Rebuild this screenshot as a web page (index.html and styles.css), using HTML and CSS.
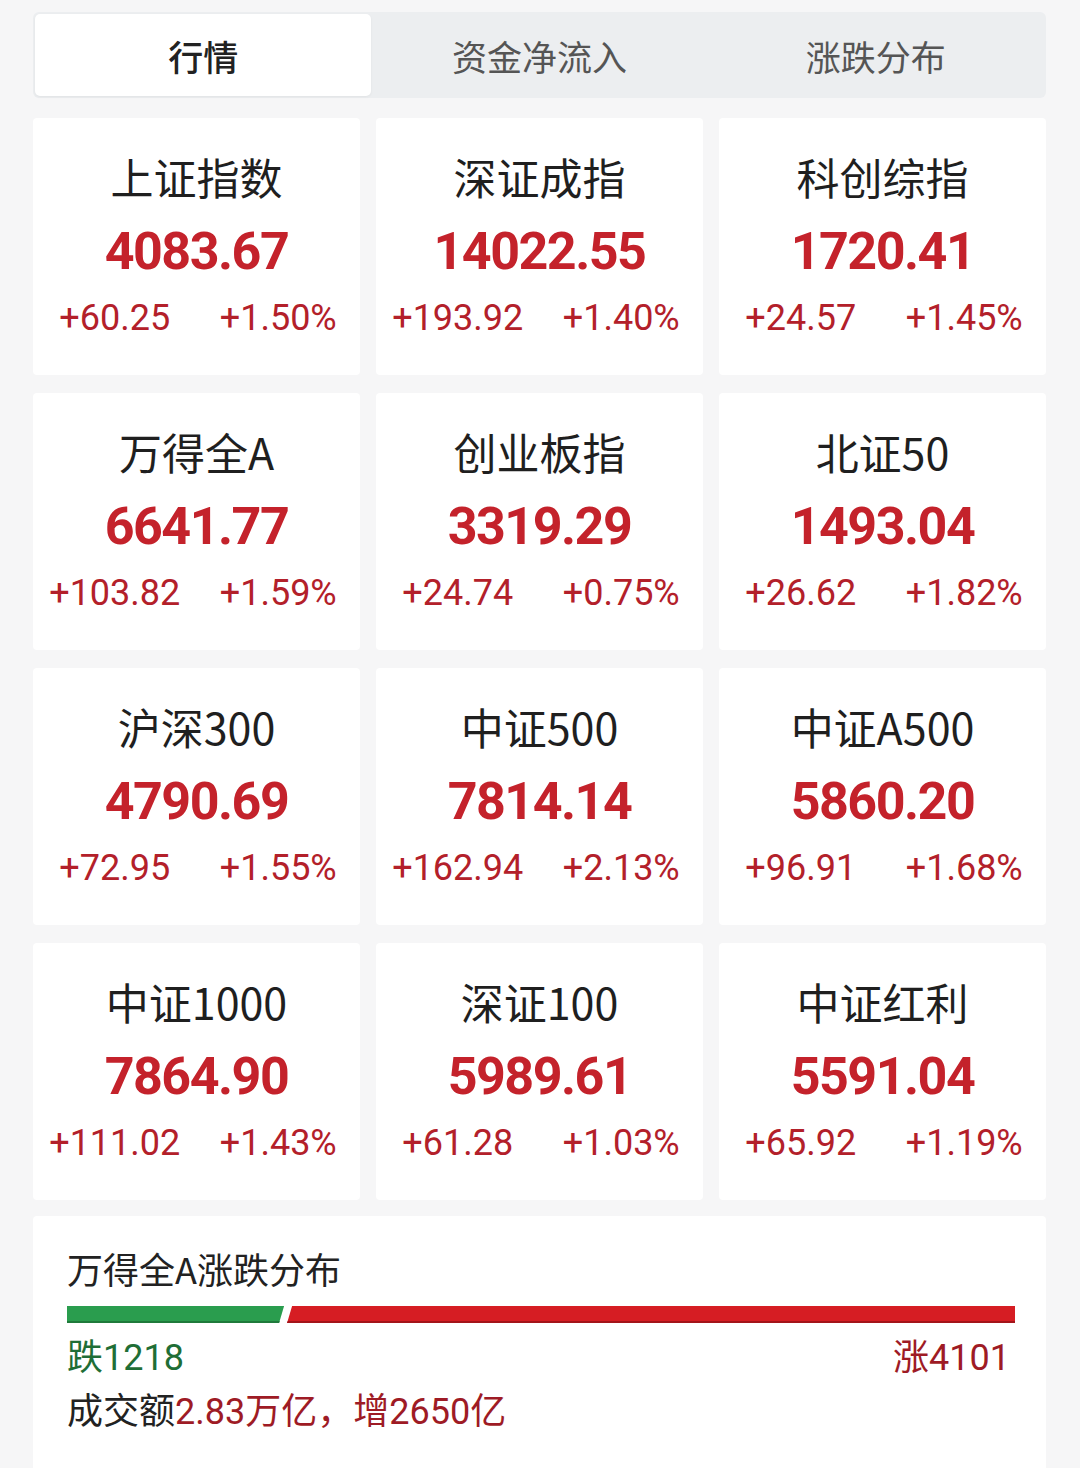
FILE: index.html
```html
<!DOCTYPE html>
<html lang="zh-CN">
<head>
  <meta charset="UTF-8" />
  <meta name="viewport" content="width=device-width,initial-scale=1.0" />
  <title>行情</title>
  <link rel="stylesheet" href="styles.css">
</head>
<body>
  <div class="page">
    <nav class="tabs">
      <a class="tab active">行情</a>
      <a class="tab">资金净流入</a>
      <a class="tab">涨跌分布</a>
    </nav>

    <div class="grid">
      <div class="card">
        <div class="name">上证指数</div>
        <div class="value">4083.67</div>
        <div class="change"><span>+60.25</span><span>+1.50%</span></div>
      </div>
      <div class="card">
        <div class="name">深证成指</div>
        <div class="value">14022.55</div>
        <div class="change"><span>+193.92</span><span>+1.40%</span></div>
      </div>
      <div class="card">
        <div class="name">科创综指</div>
        <div class="value">1720.41</div>
        <div class="change"><span>+24.57</span><span>+1.45%</span></div>
      </div>

      <div class="card">
        <div class="name">万得全A</div>
        <div class="value">6641.77</div>
        <div class="change"><span>+103.82</span><span>+1.59%</span></div>
      </div>
      <div class="card">
        <div class="name">创业板指</div>
        <div class="value">3319.29</div>
        <div class="change"><span>+24.74</span><span>+0.75%</span></div>
      </div>
      <div class="card">
        <div class="name">北证50</div>
        <div class="value">1493.04</div>
        <div class="change"><span>+26.62</span><span>+1.82%</span></div>
      </div>

      <div class="card">
        <div class="name">沪深300</div>
        <div class="value">4790.69</div>
        <div class="change"><span>+72.95</span><span>+1.55%</span></div>
      </div>
      <div class="card">
        <div class="name">中证500</div>
        <div class="value">7814.14</div>
        <div class="change"><span>+162.94</span><span>+2.13%</span></div>
      </div>
      <div class="card">
        <div class="name">中证A500</div>
        <div class="value">5860.20</div>
        <div class="change"><span>+96.91</span><span>+1.68%</span></div>
      </div>

      <div class="card">
        <div class="name">中证1000</div>
        <div class="value">7864.90</div>
        <div class="change"><span>+111.02</span><span>+1.43%</span></div>
      </div>
      <div class="card">
        <div class="name">深证100</div>
        <div class="value">5989.61</div>
        <div class="change"><span>+61.28</span><span>+1.03%</span></div>
      </div>
      <div class="card">
        <div class="name">中证红利</div>
        <div class="value">5591.04</div>
        <div class="change"><span>+65.92</span><span>+1.19%</span></div>
      </div>
    </div>

    <div class="breadth">
      <div class="breadth-title">万得全A涨跌分布</div>
      <div class="bar">
        <div class="bar-down" style="width:22.9%"></div>
        <div class="bar-up"></div>
      </div>
      <div class="counts">
        <span class="down">跌1218</span>
        <span class="up">涨4101</span>
      </div>
      <div class="turnover">成交额<span class="hl">2.83万亿，增2650亿</span></div>
    </div>
  </div>
</body>
</html>
```

FILE: styles.css
```css
body {
  margin: 0;
  background: #f6f6f7;
  font-family: Roboto, "Noto Sans CJK SC", sans-serif;
  color: #222;
}

.page {
  width: 1013px;
  margin-left: 33px;
  padding-top: 12px;
}

.tabs {
  display: flex;
  background: #eceef0;
  border-radius: 6px;
  padding: 2px;
  height: 82px;
}

.tab {
  flex: 1;
  display: flex;
  align-items: center;
  justify-content: center;
  font-family: "Noto Sans CJK SC", sans-serif;
  font-size: 35px;
  color: #555;
  border-radius: 5px;
}

.tab.active {
  background: #fff;
  color: #222;
  font-weight: 500;
  box-shadow: 0 1px 3px #0000000d;
}

.grid {
  display: grid;
  grid-template-columns: repeat(3, 1fr);
  grid-auto-rows: 257px;
  gap: 18px 16px;
  margin-top: 20px;
}

.card {
  background: #fff;
  border-radius: 4px;
  padding-top: 28px;
  text-align: center;
}

.name {
  font-family: "Noto Sans CJK SC", sans-serif;
  font-size: 43px;
  line-height: 60px;
  color: #1f1f1f;
}

.value {
  margin-top: 10px;
  font-size: 52px;
  line-height: 72px;
  font-weight: 700;
  letter-spacing: -1.5px;
  color: #c4222b;
}

.change {
  display: grid;
  grid-template-columns: 1fr 1fr;
  font-size: 36px;
  line-height: 60px;
  color: #b3202a;
}

.breadth {
  background: #fff;
  margin-top: 16px;
  padding: 28px 31px 40px 34px;
  border-radius: 4px 4px 0 0;
}

.breadth-title {
  font-family: "Noto Sans CJK SC", sans-serif;
  font-size: 36px;
  line-height: 48px;
}

.bar {
  display: flex;
  gap: 3px;
  height: 17px;
  margin-top: 14px;
}

.bar-down {
  background: #2a9d4e;
  box-shadow: inset 0 -2px #1f7a3b;
  clip-path: polygon(0 0, 100% 0, calc(100% - 5px) 100%, 0 100%);
}

.bar-up {
  flex: 1;
  background: #d61d23;
  box-shadow: inset 0 -2px #a3141a;
  clip-path: polygon(5px 0, 100% 0, 100% 100%, 0 100%);
}

.counts {
  display: flex;
  justify-content: space-between;
  margin-top: 11px;
  padding-right: 5px;
  font-size: 36px;
  line-height: 48px;
}

.down {
  color: #1f6e36;
}

.up {
  color: #9e1b25;
}

.turnover {
  margin-top: 6px;
  font-size: 36px;
  line-height: 48px;
}

.turnover .hl {
  color: #9e1b25;
}
```
